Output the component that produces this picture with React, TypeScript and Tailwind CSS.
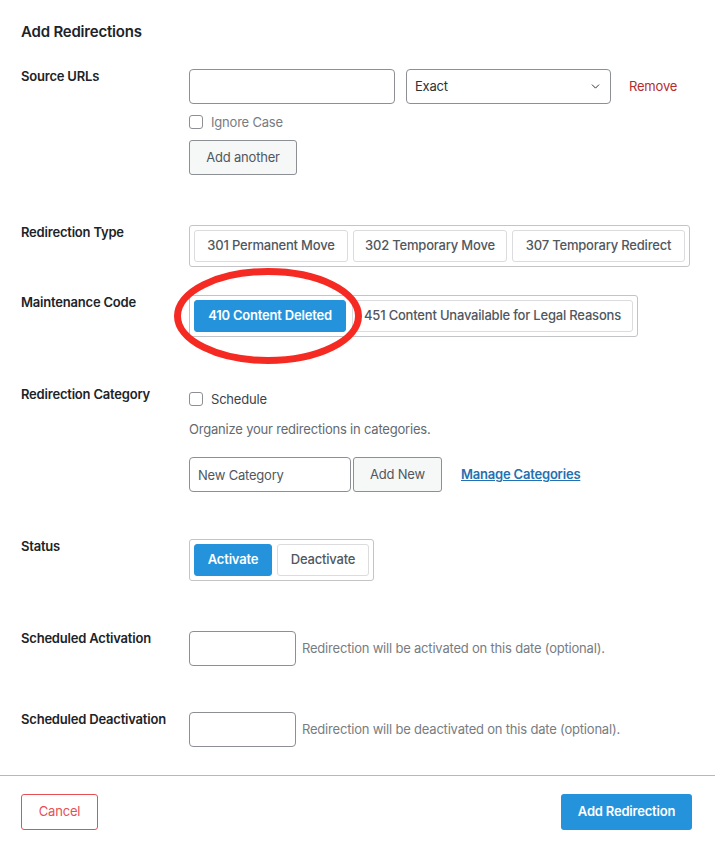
import { ChevronDown } from "lucide-react";

const font = { fontFamily: "Inter, 'Liberation Sans', sans-serif" };

function Label({ children }: { children: React.ReactNode }) {
  return (
    <div className="w-[168px] shrink-0 -mt-[1px] text-[13px] leading-[16px] font-semibold text-[#1d2327]">
      {children}
    </div>
  );
}

function Check({ label, tone }: { label: string; tone: string }) {
  return (
    <label className="flex items-center gap-2 h-[14px]">
      <span className="w-[14px] h-[14px] rounded-[3px] border border-[#8c8f94] bg-white" />
      <span className={`text-[13px] leading-[14px] ${tone}`}>{label}</span>
    </label>
  );
}

function GroupButton({ children, w, active }: { children: React.ReactNode; w: string; active?: boolean }) {
  return (
    <button
      className={
        active
          ? `${w} h-[32px] rounded-[3px] border border-[#2493dc] bg-[#2493dc] text-white text-[13px] font-semibold`
          : `${w} h-[32px] rounded-[3px] border border-[#dcdcde] bg-white text-[#50575e] text-[13px] font-medium`
      }
    >
      {children}
    </button>
  );
}

export default function App() {
  return (
    <div className="w-[715px] h-[848px] bg-white tracking-[-0.2px]" style={font}>
      <div className="px-[21px] pt-[22px]">
        <h2 className="text-[15px] leading-[20px] font-semibold text-[#1d2327]">Add Redirections</h2>

        {/* Source URLs */}
        <div className="flex mt-[27px]">
          <Label>Source URLs</Label>
          <div className="flex flex-col">
            <div className="flex items-center">
              <input className="w-[206px] h-[35px] rounded-[4px] border border-[#8c8f94] bg-white" />
              <div className="ml-[11px] w-[205px] h-[35px] rounded-[4px] border border-[#8c8f94] flex items-center justify-between pl-[8px] pr-[8px]">
                <span className="text-[13px] text-[#2c3338]">Exact</span>
                <ChevronDown className="w-[13px] h-[13px] text-[#2c3338]" strokeWidth={1.8} />
              </div>
              <a className="ml-[18px] text-[13px] text-[#b32d2e]">Remove</a>
            </div>
            <div className="mt-[11px]">
              <Check label="Ignore Case" tone="text-[#787c82]" />
            </div>
            <button className="mt-[11px] w-[108px] h-[35px] rounded-[3px] border border-[#8c8f94] bg-[#f6f7f7] text-[13px] text-[#50575e]">
              Add another
            </button>
          </div>
        </div>

        {/* Redirection Type */}
        <div className="flex mt-[50px]">
          <Label>Redirection Type</Label>
          <div className="w-[501px] h-[42px] rounded-[3px] border border-[#c3c4c7] flex items-center gap-[5px] px-[4px]">
            <GroupButton w="w-[154px]">301 Permanent Move</GroupButton>
            <GroupButton w="w-[154px]">302 Temporary Move</GroupButton>
            <GroupButton w="w-[173px]">307 Temporary Redirect</GroupButton>
          </div>
        </div>

        {/* Maintenance Code */}
        <div className="flex mt-[28px]">
          <Label>Maintenance Code</Label>
          <div className="relative">
            <div className="w-[449px] h-[42px] rounded-[3px] border border-[#c3c4c7] flex items-center gap-[6px] px-[4px]">
              <GroupButton w="w-[152px]" active>
                410 Content Deleted
              </GroupButton>
              <GroupButton w="w-[281px]">451 Content Unavailable for Legal Reasons</GroupButton>
            </div>
            <svg className="absolute left-[-16px] top-[-28px]" width="190" height="98" viewBox="0 0 190 98">
              <ellipse cx="95" cy="49" rx="90.5" ry="44.5" fill="none" stroke="#f52a22" strokeWidth="7" />
            </svg>
          </div>
        </div>

        {/* Redirection Category */}
        <div className="flex mt-[50px]">
          <Label>Redirection Category</Label>
          <div className="flex flex-col">
            <div className="mt-[5px]">
              <Check label="Schedule" tone="text-[#3c434a]" />
            </div>
            <p className="mt-[14px] text-[13px] leading-[18px] text-[#646970]">
              Organize your redirections in categories.
            </p>
            <div className="flex items-center mt-[19px]">
              <input
                placeholder="New Category"
                className="w-[162px] h-[35px] rounded-[4px] border border-[#8c8f94] px-[8px] text-[13px] placeholder:text-[#50575e]"
              />
              <button className="ml-[2px] w-[89px] h-[35px] rounded-[3px] border border-[#8c8f94] bg-[#f6f7f7] text-[13px] text-[#50575e]">
                Add New
              </button>
              <a className="ml-[19px] text-[13px] font-semibold text-[#2271b1] underline">Manage Categories</a>
            </div>
          </div>
        </div>

        {/* Status */}
        <div className="flex mt-[47px]">
          <Label>Status</Label>
          <div className="w-[185px] h-[42px] rounded-[3px] border border-[#c3c4c7] flex items-center gap-[5px] px-[4px]">
            <GroupButton w="w-[78px]" active>
              Activate
            </GroupButton>
            <GroupButton w="w-[92px]">Deactivate</GroupButton>
          </div>
        </div>

        {/* Scheduled Activation */}
        <div className="flex mt-[50px]">
          <Label>Scheduled Activation</Label>
          <div className="flex items-center">
            <input className="w-[107px] h-[35px] rounded-[4px] border border-[#8c8f94]" />
            <span className="ml-[6px] text-[13px] text-[#787c82]">Redirection will be activated on this date (optional).</span>
          </div>
        </div>

        {/* Scheduled Deactivation */}
        <div className="flex mt-[46px]">
          <Label>Scheduled Deactivation</Label>
          <div className="flex items-center">
            <input className="w-[107px] h-[35px] rounded-[4px] border border-[#8c8f94]" />
            <span className="ml-[6px] text-[13px] text-[#787c82]">Redirection will be deactivated on this date (optional).</span>
          </div>
        </div>
      </div>

      <div className="mt-[28px] border-t border-[#b4b9be]" />

      <div className="flex justify-between px-[21px] pt-[18px]">
        <button className="w-[77px] h-[36px] rounded-[3px] border border-[#e65054] text-[13px] text-[#e65054]">Cancel</button>
        <button className="w-[131px] h-[36px] mr-[2px] rounded-[3px] bg-[#2493dc] text-[13px] font-semibold text-white">
          Add Redirection
        </button>
      </div>
    </div>
  );
}
